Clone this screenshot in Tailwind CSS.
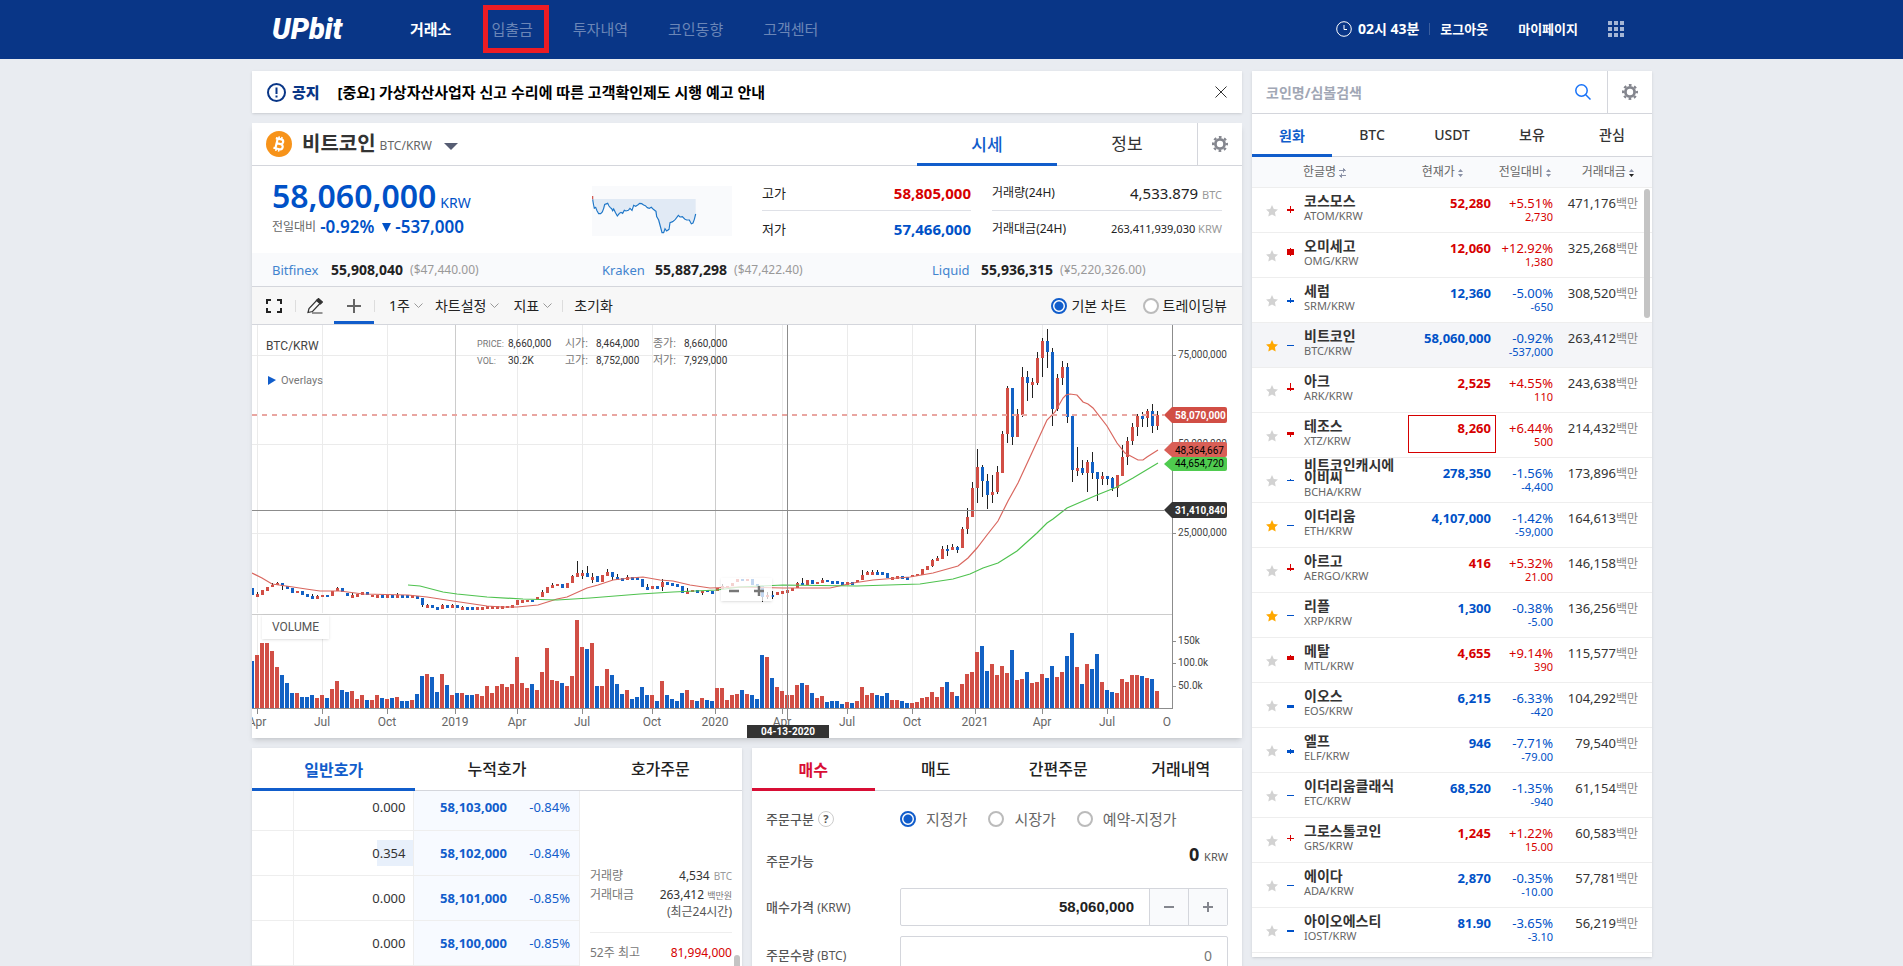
<!DOCTYPE html>
<html lang="ko">

<head>
    <meta charset="UTF-8">
    <meta name="viewport" content="width=device-width, initial-scale=1.0">
    <title>업비트 - 거래소</title>
    <script src="https://cdn.jsdelivr.net/npm/@tailwindcss/browser@4"></script>
</head>

<body class="h-screen overflow-hidden bg-[#e9ecf1] font-['Noto_Sans','Noto_Sans_CJK_KR',sans-serif] text-sm leading-5 text-[#333]">

    <!-- header -->
    <header class="bg-[#093687] pl-px">
        <div class="mx-auto flex h-[59px] max-w-[1400px] items-center px-5 pb-px">
            <a href="#" class="w-[138px] font-[Roboto] text-[29px] font-black italic leading-6 text-white">UPbit</a>
            <nav class="flex items-center gap-10 text-[15px] text-[#6b86b7]">
                <a href="#" class="font-bold text-white">거래소</a>
                <a href="#" class="relative">입출금<span class="absolute -left-2 -right-4 -inset-y-[14px] border-5 border-[#ed1c24]"></span></a>
                <a href="#">투자내역</a>
                <a href="#">코인동향</a>
                <a href="#">고객센터</a>
            </nav>
            <div class="ml-auto flex items-center text-[13px] font-bold text-white">
                <svg class="mr-1.5 size-4" viewBox="0 0 16 16" fill="none" stroke="#fff">
                    <circle cx="8" cy="8" r="7.3" />
                    <path d="M8 4v4.5h3" />
                </svg>
                <span class="text-sm">02시 43분</span>
                <span class="mx-2.5 h-3 w-px bg-[#3a5e9f]"></span>
                <a href="#" class="text-[13px]">로그아웃</a>
                <a href="#" class="ml-[30px]">마이페이지</a>
                <button class="ml-[30px] mr-2" aria-label="메뉴">
                    <svg class="size-4" viewBox="0 0 16 16" fill="#a5b6d5">
                        <path d="M0 0h4v4H0zM6 0h4v4H6zM12 0h4v4h-4zM0 6h4v4H0zM6 6h4v4H6zM12 6h4v4h-4zM0 12h4v4H0zM6 12h4v4H6zM12 12h4v4h-4z" />
                    </svg>
                </button>
            </div>
        </div>
    </header>

    <div class="pl-px">
        <main class="mx-auto grid max-w-[1400px] grid-cols-[minmax(0,1fr)_400px] items-start gap-2.5 pt-3">
            <div class="flex flex-col gap-2.5">

                <!-- notice -->
                <section class="flex h-[42px] items-center bg-white px-[15px] text-[15px] font-bold text-black shadow-sm">
                    <svg class="mr-1.5 size-[19px]" viewBox="0 0 19 19" fill="none" stroke="#093687" stroke-width="2">
                        <circle cx="9.500" cy="9.500" r="8.500" />
                        <path d="M9.500 4.500v6.500M9.500 12.500v2" />
                    </svg>
                    <strong class="mr-[18px] text-[#093687]">공지</strong>
                    <a href="#">[중요] 가상자산사업자 신고 수리에 따른 고객확인제도 시행 예고 안내</a>
                    <button class="ml-auto" aria-label="닫기">
                        <svg class="size-3" viewBox="0 0 12 12" stroke="#333">
                            <path d="M.500 .500l11 11M11.500 .500l-11 11" />
                        </svg>
                    </button>
                </section>

                <!-- ticker and chart -->
                <section class="bg-white shadow-md">
                    <div class="flex h-[43px] border-b border-[#d4d6dc]">
                        <div class="flex items-center pl-3.5">
                            <svg class="mr-2.5 size-[26px]" viewBox="0 0 26 26">
                                <circle cx="13" cy="13" r="13" fill="#f7931a" />
                                <g transform="rotate(14 13 13)" fill="none" stroke="#fff">
                                    <path stroke-width="2.200" d="M10.500 8v10M8.500 8h5.700a2.300 2.300 0 0 1 0 4.700h-3.700M10.500 12.700h4.200a2.600 2.600 0 0 1 0 5.300h-6.200" />
                                    <path stroke-width="1.600" d="M11.500 5.500v2.500M14.300 5.500v2.500M11.500 18v2.500M14.300 18v2.500" />
                                </g>
                            </svg>
                            <h1 class="text-xl font-bold">비트코인</h1>
                            <span class="ml-1 pt-1 text-xs text-[#666]">BTC/KRW</span>
                            <button class="ml-3 pt-1" aria-label="코인 선택">
                                <svg class="h-[7px] w-3.5" viewBox="0 0 14 7" fill="#565d73"><path d="M0 0h14l-7 7z" /></svg>
                            </button>
                        </div>
                        <div class="ml-auto flex text-[17px]">
                            <button class="-mb-px w-[140px] border-b-3 border-[#115dcb] pt-[3px] font-medium text-[#115dcb]">시세</button>
                            <button class="w-[140px]">정보</button>
                            <button class="flex w-[45px] items-center justify-center border-l border-[#d4d6dc]" aria-label="설정">
                                <svg class="size-4" viewBox="0 0 16 16" fill="none" stroke="#84868e">
                                    <circle cx="8" cy="8" r="4.600" stroke-width="2.800" />
                                    <circle cx="8" cy="8" r="6.900" stroke-width="2.200" stroke-dasharray="2.700 2.720" stroke-dashoffset="1.350" />
                                </svg>
                            </button>
                        </div>
                    </div>

                    <div class="flex h-[87px] pl-5 pr-5">
                        <div class="w-80 pt-[11px] text-[#0051c7]">
                            <p class="text-[32px] font-semibold leading-[38px]">58,060,000<span class="ml-1 text-sm font-normal">KRW</span></p>
                            <p class="flex items-center text-[17px] font-semibold leading-6">
                                <span class="mr-1 text-xs font-normal text-[#666]">전일대비</span>-0.92%
                                <svg class="ml-2 mr-1 size-[9px]" viewBox="0 0 9 9" fill="#0051c7"><path d="M0 0h9l-4.500 9z" /></svg>-537,000
                            </p>
                        </div>
                        <svg class="mt-5 h-[50px] w-[140px]" viewBox="1056 48 420 150">
                            <path fill="#f9fafc" d="M1056 48h420v150h-420z" />
                            <path fill="#e1eaf5" d="M1058 87H1367V132L1359 159 1348 150 1315 136 1290 158 1280 183 1266 188 1250 140 1240 118 1205 101 1181 106 1158 123 1132 138 1115 116 1103 100 1087 126 1076 131z" />
                            <polyline fill="none" stroke="#1f77c8" stroke-width="3.500" points="1058,88 1060,100 1063,115 1067,112 1071,122 1076,131 1082,131 1087,126 1091,115 1094,103 1103,100 1107,108 1111,113 1115,116 1118,122 1121,117 1127,129 1132,138 1138,130 1143,127 1148,130 1153,121 1158,123 1165,121 1170,115 1176,121 1181,106 1187,109 1194,104 1199,100 1205,101 1211,105 1216,107 1222,113 1228,115 1234,112 1240,118 1248,124 1250,140 1256,150 1260,165 1266,188 1271,188 1275,176 1280,183 1287,178 1290,158 1298,155 1306,148 1315,136 1320,141 1327,140 1334,147 1340,150 1348,150 1354,161 1359,159 1363,148 1367,132" />
                            <path stroke="#d14e45" stroke-width="3.500" d="M1058 78v10" />
                        </svg>
                        <dl class="ml-[30px] w-[209px] pt-[9px] text-[13px] text-[#222]">
                            <div class="flex h-9 items-center border-b border-[#dfe1e7]">
                                <dt>고가</dt>
                                <dd class="ml-auto text-[15px] font-bold text-[#d60000]">58,805,000</dd>
                            </div>
                            <div class="flex h-9 items-center">
                                <dt>저가</dt>
                                <dd class="ml-auto text-[15px] font-bold text-[#0051c7]">57,466,000</dd>
                            </div>
                        </dl>
                        <dl class="ml-[21px] flex-1 pt-[9px] text-xs text-[#222]">
                            <div class="flex h-9 items-center border-b border-[#dfe1e7]">
                                <dt>거래량(24H)</dt>
                                <dd class="ml-auto text-[15px]">4,533.879 <span class="text-[11px] text-[#999]">BTC</span></dd>
                            </div>
                            <div class="flex h-9 items-center">
                                <dt>거래대금(24H)</dt>
                                <dd class="ml-auto text-[11px]">263,411,939,030 <span class="text-[11px] text-[#999]">KRW</span></dd>
                            </div>
                        </dl>
                    </div>

                    <ul class="grid h-[34px] grid-cols-3 items-center border-b border-[#d4d6dc] bg-[#f9fafc]">
                        <li class="flex items-center pl-5"><a href="#" class="w-[59px] text-[13px] text-[#4284cf]">Bitfinex</a><b class="mr-[7px] text-[#222]">55,908,040</b><span class="text-xs text-[#999]">($47,440.00)</span></li>
                        <li class="flex items-center pl-5"><a href="#" class="w-[53px] text-[13px] text-[#4284cf]">Kraken</a><b class="mr-[7px] text-[#222]">55,887,298</b><span class="text-xs text-[#999]">($47,422.40)</span></li>
                        <li class="flex items-center pl-5"><a href="#" class="w-[49px] text-[13px] text-[#4284cf]">Liquid</a><b class="mr-[7px] text-[#222]">55,936,315</b><span class="text-xs text-[#999]">(¥5,220,326.00)</span></li>
                    </ul>

                    <!-- chart toolbar -->
                    <div class="flex h-[38px] items-center border-b border-[#d4d6dc] bg-[#f7f7f7] text-[#222]">
                        <button class="flex w-[43px] justify-center pl-px" aria-label="전체화면">
                            <svg class="h-[14px] w-4" viewBox="0 0 16 14" fill="none" stroke="#222" stroke-width="2"><path d="M1 5V1h4M11 1h4v4M15 9v4h-4M5 13H1V9" /></svg>
                        </button>
                        <span class="h-3 w-px bg-[#ddd]"></span>
                        <button class="flex w-[38px] justify-center" aria-label="그리기">
                            <svg class="size-4" viewBox="0 0 16 16" fill="none" stroke="#333" stroke-width="1.200">
                                <path d="M1 14.500l1-4 8-8.500 3.500 3-8 8.500zM5 15h10.500" />
                                <path fill="#333" d="M9.500 2.500l2-2 4 3.500-2 2z" />
                            </svg>
                        </button>
                        <button class="flex h-full w-10 items-center justify-center border-b-3 border-[#115dcb] pt-[3px]" aria-label="십자선">
                            <svg class="size-3.5" viewBox="0 0 14 14" stroke="#666" stroke-width="2"><path d="M7 0v14M0 7h14" /></svg>
                        </button>
                        <span class="h-3 w-px bg-[#ddd]"></span>
                        <button class="ml-3.5 flex items-center gap-1">1주<svg class="h-[5px] w-[9px]" viewBox="0 0 9 5" fill="none" stroke="#999"><path d="M.500 .500l4 4 4-4" /></svg></button>
                        <button class="ml-3 flex items-center gap-1">차트설정<svg class="h-[5px] w-[9px]" viewBox="0 0 9 5" fill="none" stroke="#999"><path d="M.500 .500l4 4 4-4" /></svg></button>
                        <button class="ml-3.5 flex items-center gap-1">지표<svg class="h-[5px] w-[9px]" viewBox="0 0 9 5" fill="none" stroke="#999"><path d="M.500 .500l4 4 4-4" /></svg></button>
                        <span class="ml-2.5 h-3 w-px bg-[#ddd]"></span>
                        <button class="ml-[11px]">초기화</button>
                        <div class="ml-auto flex items-center gap-4 pr-[15px]">
                            <label class="flex items-center gap-1"><input type="radio" name="chart" checked class="size-4 appearance-none rounded-full border-2 border-[#bbb] bg-white checked:border-[#115dcb] checked:bg-[radial-gradient(circle,#115dcb_4px,white_5px)]">기본 차트</label>
                            <label class="flex items-center gap-1"><input type="radio" name="chart" class="size-4 appearance-none rounded-full border-2 border-[#bbb] bg-white checked:border-[#115dcb] checked:bg-[radial-gradient(circle,#115dcb_4px,white_5px)]">트레이딩뷰</label>
                        </div>
                    </div>

                    <!-- chart -->
                    <div class="relative">
                        <svg id="chart" class="block w-full font-[Roboto,'Noto_Sans_CJK_KR',sans-serif]" viewBox="0 0 990 413">
                            <g id="grid" shape-rendering="crispEdges"></g>
                            <g id="bars" shape-rendering="crispEdges"></g>
                            <g id="wicks" shape-rendering="crispEdges"></g>
                            <path fill="none" stroke="#d9675f" stroke-width="1.200" d="M0 248L10 253 20 259 41 262 54 264 68 266 88 266 111 269 156 270 175 272 201 276 235 281 250 282 265 282 286 280 305 274 315 272 335 263 346 260 361 255 378 253 391 252 408 255 421 256 438 260 458 263 488 262 531 263 578 263 601 258 621 255 658 252 681 248 706 241 716 233 725 223 735 210 746 196 756 176 766 158 778 132 795 95 803 87 811 73 814 70 818 69 825 70 831 77 836 79 841 83 855 101 865 118 873 128 886 135 891 135 895 132 906 125" />
                            <path fill="none" stroke="#4fc24f" stroke-width="1.200" d="M156 260L168 261 191 267 205 269 235 272 271 274 305 275 338 273 388 269 421 267 465 265 488 262 531 260 605 261 668 259 701 254 718 249 731 243 746 238 765 226 785 208 795 198 801 194 815 183 845 170 865 162 881 153 906 138" />
                            <g shape-rendering="crispEdges" stroke="#8c8c8c">
                                <path d="M535.500 0v395M0 185.500h912" />
                                <path d="M920.500 0v384M0 383.500h921" />
                            </g>
                            <path stroke="#e9a6a1" stroke-width="2" stroke-dasharray="5 5" d="M0 90h912" />
                            <g id="labels" fill="#666"></g>
                            <path fill="#4fcb4f" d="M912 139l8-7h53q2 0 2 2v10q0 2-2 2h-53z" />
                            <path fill="#d95f56" d="M912 125l8-8h53q2 0 2 2v11q0 2-2 2h-53z" />
                            <path fill="#d14e45" d="M912 90l8-8h53q2 0 2 2v12q0 2-2 2h-53z" />
                            <path fill="#333" d="M912 185l8-8h53q2 0 2 2v12q0 2-2 2h-53z" />
                            <g font-size="10">
                                <text x="923" y="142">44,654,720</text>
                                <text x="923" y="129">48,364,667</text>
                                <g fill="#fff" font-weight="700">
                                    <text x="923" y="94">58,070,000</text>
                                    <text x="923" y="189">31,410,840</text>
                                </g>
                            </g>
                            <path fill="#333" d="M495 400h82v13h-82z" />
                            <text x="536" y="410" text-anchor="middle" font-size="10" font-weight="700" fill="#fff">04-13-2020</text>
                            <text x="14" y="25" font-size="12" fill="#444">BTC/KRW</text>
                            <path fill="#115dcb" d="M16 51l8 4-8 5z" />
                            <text x="29" y="59" font-size="11" fill="#777">Overlays</text>
                            <g font-size="9" fill="#777">
                                <text x="225" y="22">PRICE:</text>
                                <text x="225" y="39">VOL:</text>
                                <g font-size="11">
                                    <text x="313" y="22">시가:</text>
                                    <text x="313" y="39">고가:</text>
                                    <text x="401" y="22">종가:</text>
                                    <text x="401" y="39">저가:</text>
                                </g>
                            </g>
                            <g font-size="10" fill="#333">
                                <text x="256" y="22">8,660,000</text>
                                <text x="256" y="39">30.2K</text>
                                <text x="344" y="22">8,464,000</text>
                                <text x="344" y="39">8,752,000</text>
                                <text x="432" y="22">8,660,000</text>
                                <text x="432" y="39">7,929,000</text>
                            </g>
                        </svg>
                        <div class="absolute left-2.5 top-[290px] bg-white px-2.5 font-[Roboto] text-xs leading-6 text-[#555] shadow">VOLUME</div>
                        <div class="absolute left-[469px] top-[253px] flex h-[23px] w-[51px] items-center bg-white/75 pt-0.5 shadow-sm">
                            <button class="flex flex-1 justify-center" aria-label="축소"><svg class="size-2.5" viewBox="0 0 10 10" stroke="#777" stroke-width="2.500"><path d="M0 5h10" /></svg></button>
                            <button class="flex flex-1 justify-center" aria-label="확대"><svg class="size-2.5" viewBox="0 0 10 10" stroke="#777" stroke-width="2.500"><path d="M0 5h10M5 0v10" /></svg></button>
                        </div>
                    </div>
                </section>

                <div class="grid grid-cols-2 gap-2.5">

                    <!-- order book -->
                    <section class="bg-white shadow-sm">
                        <div class="grid h-[43px] grid-cols-3 border-b border-[#d4d6dc] text-base font-medium text-[#222]">
                            <button class="-mb-px border-b-3 border-[#115dcb] pt-[3px] font-bold text-[#115dcb]">일반호가</button>
                            <button>누적호가</button>
                            <button>호가주문</button>
                        </div>
                        <div class="relative flex h-[360px] overflow-hidden">
                            <table class="-mt-1.5 w-[328px] table-fixed self-start text-right text-[13px]">
                                <tbody id="book"></tbody>
                            </table>
                            <dl class="ml-2.5 w-[142px] pt-[75px] text-xs text-[#777]">
                                <div class="flex h-[19px] items-center"><dt>거래량</dt><dd class="ml-auto text-[#333]">4,534 <span class="ml-px text-[10px] text-[#999]">BTC</span></dd></div>
                                <div class="flex h-[19px] items-center"><dt>거래대금</dt><dd class="ml-auto text-[#333]">263,412 <span class="text-[9px] text-[#777]">백만원</span></dd></div>
                                <div class="flex h-[29px] items-start justify-end border-b border-[#eee]"><dd class="text-[#555]">(최근24시간)</dd></div>
                                <div class="flex h-10 items-center"><dt>52주 최고</dt><dd class="ml-auto text-[#d60000]">81,994,000</dd></div>
                            </dl>
                            <span class="absolute right-0.5 top-[164px] h-32 w-1.5 rounded-full bg-[#c4c4c4]"></span>
                        </div>
                    </section>

                    <!-- order form -->
                    <section class="bg-white shadow-sm">
                        <div class="grid h-[43px] grid-cols-4 border-b border-[#d4d6dc] text-base font-medium text-[#222]">
                            <button class="-mb-px border-b-3 border-[#d80e35] pt-[3px] font-bold text-[#d80e35]">매수</button>
                            <button>매도</button>
                            <button>간편주문</button>
                            <button>거래내역</button>
                        </div>
                        <form class="px-3.5 text-[13px] text-[#555]">
                            <fieldset class="flex h-14 items-center">
                                <span class="font-medium">주문구분</span>
                                <button type="button" class="ml-1 size-4 rounded-full border border-[#ccc] text-[11px] font-bold leading-3.5">?</button>
                                <div class="ml-auto flex w-[328px] items-center gap-[21px] text-[15px] text-[#666]">
                                    <label class="flex items-center gap-2.5"><input type="radio" name="type" checked class="size-4 appearance-none rounded-full border-2 border-[#bbb] checked:border-[#115dcb] checked:bg-[radial-gradient(circle,#115dcb_4px,white_5px)]">지정가</label>
                                    <label class="flex items-center gap-2.5"><input type="radio" name="type" class="size-4 appearance-none rounded-full border-2 border-[#bbb] checked:border-[#115dcb] checked:bg-[radial-gradient(circle,#115dcb_4px,white_5px)]">시장가</label>
                                    <label class="flex items-center gap-2.5"><input type="radio" name="type" class="size-4 appearance-none rounded-full border-2 border-[#bbb] checked:border-[#115dcb] checked:bg-[radial-gradient(circle,#115dcb_4px,white_5px)]">예약-지정가</label>
                                </div>
                            </fieldset>
                            <div class="flex h-[41px] justify-between">
                                <span class="pt-1 font-medium">주문가능</span>
                                <p class="text-[11px] leading-[14px]"><b class="mr-0.5 text-lg leading-[14px] text-[#222]">0</b> KRW</p>
                            </div>
                            <div class="mb-2.5 flex items-center justify-between">
                                <label for="price" class="font-medium">매수가격 <span class="text-xs font-normal">(KRW)</span></label>
                                <div class="flex h-[38px] w-[328px] rounded-xs border border-[#d4d6dc]">
                                    <input id="price" type="text" value="58,060,000" class="min-w-0 flex-1 px-[15px] text-right font-['Liberation_Sans'] text-[15px] font-bold text-[#222]">
                                    <button type="button" class="flex w-[39px] items-center justify-center border-l border-[#d4d6dc] bg-[#f9fafc]" aria-label="가격 내리기"><svg class="size-2.5" viewBox="0 0 10 10" stroke="#84868e" stroke-width="2"><path d="M0 5h10" /></svg></button>
                                    <button type="button" class="flex w-[39px] items-center justify-center border-l border-[#d4d6dc] bg-[#f9fafc]" aria-label="가격 올리기"><svg class="size-2.5" viewBox="0 0 10 10" stroke="#84868e" stroke-width="2"><path d="M0 5h10M5 0v10" /></svg></button>
                                </div>
                            </div>
                            <div class="flex items-center justify-between">
                                <label for="amount" class="font-medium">주문수량 <span class="text-xs font-normal">(BTC)</span></label>
                                <input id="amount" type="text" placeholder="0" class="h-[38px] w-[328px] rounded-xs border border-[#d4d6dc] px-[15px] text-right text-sm placeholder:text-[#777]">
                            </div>
                        </form>
                    </section>
                </div>
            </div>

            <!-- coin list -->
            <aside class="relative bg-white pb-1 shadow-sm">
                <div class="flex h-[43px] items-center border-b border-[#d4d6dc]">
                    <input type="text" placeholder="코인명/심볼검색" aria-label="코인명/심볼검색" class="h-full min-w-0 flex-1 pl-3.5 text-sm font-bold placeholder:text-[#a1a7b5]">
                    <button class="mr-4" aria-label="검색">
                        <svg class="size-4" viewBox="0 0 16 16" fill="none" stroke="#1772f8" stroke-width="1.500"><circle cx="6.500" cy="6.500" r="5.700" /><path d="M10.500 10.500l5 5" /></svg>
                    </button>
                    <button class="flex h-full w-[45px] items-center justify-center border-l border-[#d4d6dc]" aria-label="설정">
                        <svg class="size-4" viewBox="0 0 16 16" fill="none" stroke="#84868e">
                            <circle cx="8" cy="8" r="4.600" stroke-width="2.800" />
                            <circle cx="8" cy="8" r="6.900" stroke-width="2.200" stroke-dasharray="2.700 2.720" stroke-dashoffset="1.350" />
                        </svg>
                    </button>
                </div>
                <div class="grid h-[43px] grid-cols-5 border-b border-[#d4d6dc] font-medium">
                    <button class="-mb-px border-b-3 border-[#115dcb] pt-[3px] font-bold text-[#115dcb]">원화</button>
                    <button>BTC</button>
                    <button>USDT</button>
                    <button>보유</button>
                    <button>관심</button>
                </div>
                <table class="w-full table-fixed border-collapse text-[13px] leading-4">
                    <thead>
                        <tr class="h-[30px] border-b border-[#eee] bg-[#f9fafc] text-right text-xs text-[#666]">
                            <th class="w-8"></th>
                            <th class="w-3.5"></th>
                            <th class="w-[98px] pl-[5px] text-left font-normal">한글명 <svg class="inline h-2.5 w-[7px]" viewBox="0 0 7 10" fill="none" stroke="#8a91a6"><path d="M0 2.500h6.500L4.500 .500M7 7.500H.500l2 2M4.500 .500v4M2.500 5.500v4" /></svg></th>
                            <th class="w-[95px] pr-7 font-normal">현재가 <svg class="inline h-2 w-[5px]" viewBox="0 0 5 8" fill="#8a91a6"><path d="M0 3l2.500-3L5 3zM0 5h5L2.500 8z" /></svg></th>
                            <th class="w-[62px] whitespace-nowrap pr-0.5 font-normal">전일대비 <svg class="inline h-2 w-[5px]" viewBox="0 0 5 8" fill="#8a91a6"><path d="M0 3l2.500-3L5 3zM0 5h5L2.500 8z" /></svg></th>
                            <th class="w-[85px] pr-1 font-normal">거래대금 <svg class="inline h-2 w-[5px]" viewBox="0 0 5 8" fill="#8a91a6"><path d="M0 3l2.500-3L5 3z" /><path fill="#222" d="M0 5h5L2.500 8z" /></svg></th>
                            <th></th>
                        </tr>
                    </thead>
                    <tbody id="coins"></tbody>
                </table>
                <span class="absolute right-0.5 top-[118px] h-[129px] w-1.5 rounded-full bg-[#c4c4c4]"></span>
            </aside>
        </main>
    </div>

    <script>
        const RED = '#d14e45';
        const BLUE = '#1261c4';

        // name, symbol, price, rate, change, volume, starred, candle [wick top, wick bottom, body top, body bottom]
        const coins = [
            ['코스모스', 'ATOM', '52,280', '+5.51%', '2,730', '471,176', 0, [3, 10, 6, 8]],
            ['오미세고', 'OMG', '12,060', '+12.92%', '1,380', '325,268', 0, [0, 8, 1, 7]],
            ['세럼', 'SRM', '12,360', '-5.00%', '-650', '308,520', 0, [5, 10, 7, 9]],
            ['비트코인', 'BTC', '58,060,000', '-0.92%', '-537,000', '263,412', 1, [7, 8, 7, 8]],
            ['아크', 'ARK', '2,525', '+4.55%', '110', '243,638', 0, [0, 8, 5, 7]],
            ['테조스', 'XTZ', '8,260', '+6.44%', '500', '214,432', 0, [4, 9, 4, 7]],
            ['비트코인캐시에이비씨', 'BCHA', '278,350', '-1.56%', '-4,400', '173,896', 0, [6, 8, 7, 8]],
            ['이더리움', 'ETH', '4,107,000', '-1.42%', '-59,000', '164,613', 1, [7, 8, 7, 8]],
            ['아르고', 'AERGO', '416', '+5.32%', '21.00', '146,158', 0, [1, 8, 5, 7]],
            ['리플', 'XRP', '1,300', '-0.38%', '-5.00', '136,256', 1, [7, 8, 7, 8]],
            ['메탈', 'MTL', '4,655', '+9.14%', '390', '115,577', 0, [2, 7, 3, 7]],
            ['이오스', 'EOS', '6,215', '-6.33%', '-420', '104,292', 0, [7, 10, 7, 10]],
            ['엘프', 'ELF', '946', '-7.71%', '-79.00', '79,540', 0, [6, 11, 7, 10]],
            ['이더리움클래식', 'ETC', '68,520', '-1.35%', '-940', '61,154', 0, [7, 8, 7, 8]],
            ['그로스톨코인', 'GRS', '1,245', '+1.22%', '15.00', '60,583', 0, [2, 8, 5, 6]],
            ['에이다', 'ADA', '2,870', '-0.35%', '-10.00', '57,781', 0, [7, 8, 7, 8]],
            ['아이오에스티', 'IOST', '81.90', '-3.65%', '-3.10', '56,219', 0, [7, 9, 7, 9]]
        ];

        document.getElementById('coins').innerHTML = coins.map(([name, symbol, price, rate, change, volume, star, c]) => {
            const up = rate[0] === '+';
            const color = up ? 'text-[#d60000]' : 'text-[#0051c7]';
            return `<tr class="h-[45px] border-b border-[#eee] ${symbol === 'BTC' ? 'bg-[#f4f5f8]' : ''}">
                <td class="pl-3.5"><svg class="mt-0.5 size-3" viewBox="0 0 12 12" fill="${star ? '#ffa800' : '#d2d2d2'}"><path d="M6 0l1.800 3.900 4.200.500-3.100 2.900.800 4.300L6 9.500l-3.700 2.100.800-4.300L0 4.400l4.200-.500z"/></svg></td>
                <td class="pl-[3px]"><svg class="h-4 w-[7px]" viewBox="0 -1 7 16" fill="${up ? '#d60000' : '#0051c7'}" shape-rendering="crispEdges"><path d="M3 ${c[0]}h1v${c[1] - c[0]}h-1zM0 ${c[2]}h7v${c[3] - c[2]}h-7z"/></svg></td>
                <td class="pl-1.5"><a href="#" class="block text-sm leading-3 font-bold break-all">${name}</a><span class="block pt-px text-[11px] leading-4 text-[#666]">${symbol}/KRW</span></td>
                <td class="relative pt-[7px] text-right align-top font-bold ${color}">${price}${symbol === 'XTZ' ? '<span class="absolute -right-[5px] top-[2px] h-[38px] w-[88px] border border-[#d60000]"></span>' : ''}</td>
                <td class="pt-[7px] text-right align-top ${color}">${rate}<span class="block text-[11px] leading-[11px]">${change}</span></td>
                <td class="whitespace-nowrap pt-[7px] text-right align-top">${volume}<span class="text-xs text-[#888]">백만</span></td>
                <td></td>
            </tr>`;
        }).join('');

        const book = [
            ['0.000', '58,103,000', '-0.84%', 0],
            ['0.354', '58,102,000', '-0.84%', 36],
            ['0.000', '58,101,000', '-0.85%', 0],
            ['0.000', '58,100,000', '-0.85%', 0],
            ['0.000', '58,099,000', '-0.85%', 0]
        ];

        document.getElementById('book').innerHTML = book.map(([size, price, rate, bar]) => `<tr class="h-[45px] border-b border-[#eee]">
            <td class="w-[41px] border-r border-[#eee]"></td>
            <td class="relative w-[120px] border-r border-[#eee] pr-[7px]"><span class="absolute right-0 top-[9px] h-[26px] bg-[#e8f0fb]" style="width:${bar}px"></span><span class="relative">${size}</span></td>
            <td class="w-[94px] bg-[#f7faff] font-bold text-[#115dcb]">${price}</td>
            <td class="border-r border-[#eee] bg-[#f7faff] pr-[9px] text-[#115dcb]">${rate}</td>
        </tr>`).join('');

        // weekly volume, R = up, B = down
        const volumes = 'B47 R53 R65 R65 R57 R41 B33 B25 B15 R15 B11 B11 B13 R10 R13 B10 R19 R27 B18 B16 R17 R9 R13 B8 R8 R13 B10 R9 B10 R11 B7 B7 R8 B14 B32 R34 B31 B16 R34 B23 R13 B15 R15 B13 B13 R14 R12 R22 R15 R22 R24 R21 R24 R51 R25 R20 B24 R18 R36 R60 R28 R27 B25 R22 R32 R88 R61 B59 R65 B22 R22 R39 B33 B24 B14 R18 B9 B11 B21 B13 R13 B7 R27 B13 B9 B7 B15 R18 R8 B7 R10 B8 B7 R20 R20 R8 R13 R14 B18 R14 B13 B9 B53 R51 B30 R21 R17 R13 R13 R23 B25 R23 B15 R10 R12 B6 B7 B7 B4 R6 B5 R7 R21 R13 R15 B13 B12 B15 R8 R8 B7 B5 R5 R6 R10 R11 R16 R11 R21 B26 R16 B12 R24 R34 R36 R56 B62 B37 R44 R33 R42 R35 B58 R28 R29 B36 R25 R26 R34 B30 B42 R31 R36 B52 B75 R41 B24 R44 B39 B54 R26 B18 B16 R15 R29 R26 R33 R33 B32 R30 B29 R17'.split(' ');

        // body top, body bottom, high, low for each week
        const candles = '263,270 269,272,267 265,270 262,266 260,262,258 258,260,257 258,261,258,265 261,264 263,268 266,268 266,270 269,272 271,274,269 271,274,270 270,272 270,272 266,271 263,266,262 263,267 268,271 270,273,268 269,272 267,270 267,270 270,272 270,273 270,273 270,273 270,273 270,273,268 270,273 270,273 270,273 271,274 273,280,273,282 280,283,279 280,283 282,285 280,284,279 280,283 280,283,279 280,283 282,285,281 282,285 282,285 282,285 282,285 281,284 281,284 281,284 281,284 281,283 280,283 275,280 275,278 275,277 275,277 272,275 267,272,265 262,268 260,263,258 259,261 259,263 258,263 251,258,250 248,252,236 248,251,245,254 248,252,241 252,255,248,258 251,257 250,257 247,251,244 247,252,247,255 252,255,249 253,256 252,255,250 252,255 252,255 254,262 262,265,259 261,264 261,264 257,262,254,266 257,260 258,261 259,262 261,268 266,269,263 265,267 265,268 266,268,266,270 265,267 266,269 263,266 261,264,259 261,263 258,261 254,257 254,256 254,256 254,260 259,262 261,272,261,277 270,272,267,274 270,272,266,274 267,270 266,269 265,268 263,266 258,263,257 258,260,253 255,260 255,259 257,259 255,258,253 255,257 256,259 256,259 257,260 257,260 257,260 255,257 250,255,245 247,250,246 247,250,245 247,250,245 247,250 248,253 252,255 251,254 251,254 252,255 250,252 249,251 244,250 241,245 235,241,234,242 233,236,231 224,234,221 224,226,220,231 222,225,219 222,225,221,228 204,223,202 192,204,183,209 163,192,157 142,163,124,178 142,156,140,172 156,170,149,184 167,170,150,178 147,167,141,169 109,148,106 63,109,61,118 63,112,63,120 89,112,84 52,90,42,92 52,58,46,76 57,60,53,73 33,58,27,60 16,33,13,52 16,27,4,43 27,84,23,101 53,84,49,86 42,53,36,60 42,92,38,98 91,145,90,157 143,146,122,151 143,148,135,150 137,148,135,167 137,148,127,154 147,154,147,176 151,154,147,160 151,154,151,160 153,163,152,166 150,163,150,172 132,151,120 116,132,112,140 102,116,98,120 91,102,89,111 91,94,87,102 86,93,84,102 86,101,79,108 90,101,86,105'.split(' ');

        let bars = '';
        let wicks = '';
        volumes.forEach((v, i) => {
            const h = Number(v.slice(1));
            bars += `<rect x="${i * 5 - 2}" y="${383 - h}" width="4" height="${h}" fill="${v[0] === 'R' ? RED : BLUE}"/>`;
        });
        candles.forEach((c, i) => {
            const [top, bottom, high = top, low = bottom] = c.split(',').map(Number);
            const color = volumes[i][0] === 'R' ? RED : BLUE;
            wicks += `<rect x="${i * 5}" y="${high}" width="1" height="${low - high}" fill="#222"/>`;
            wicks += `<rect x="${i * 5 - 1}" y="${top}" width="3" height="${bottom - top}" fill="${color}"/>`;
        });
        document.getElementById('bars').innerHTML = bars;
        document.getElementById('wicks').innerHTML = wicks;

        const months = [[5, 'Apr'], [70, 'Jul'], [135, 'Oct'], [203, '2019'], [265, 'Apr'], [330, 'Jul'], [400, 'Oct'], [463, '2020'], [530, 'Apr'], [595, 'Jul'], [660, 'Oct'], [723, '2021'], [790, 'Apr'], [855, 'Jul']];
        let grid = '<path stroke="#ebebeb" d="M0 30.500h920M0 119.500h920M0 208.500h920"/>';
        let labels = '';
        months.forEach(([x, text]) => {
            grid += `<path stroke="${text[0] === '2' ? '#ccc' : '#ebebeb'}" d="M${x}.500 0v288M${x}.500 290v93"/><path stroke="#8c8c8c" d="M${x}.500 383v6"/>`;
            labels += `<text x="${x}" y="401" font-size="12" text-anchor="middle">${text}</text>`;
        });
        labels += '<text x="915" y="401" font-size="12" text-anchor="middle">O</text>';
        grid += '<path stroke="#ccc" d="M0 289.500h920"/>';
        [[30, '75,000,000'], [119, '50,000,000'], [208, '25,000,000'], [316, '150k'], [338, '100.0k'], [361, '50.0k']].forEach(([y, text]) => {
            grid += `<path stroke="#8c8c8c" d="M920 ${y}.500h4"/>`;
            labels += `<text x="926" y="${y + 3}" font-size="10" fill="#444">${text}</text>`;
        });
        document.getElementById('grid').innerHTML = grid;
        document.getElementById('labels').innerHTML = labels;
    </script>
</body>

</html>
